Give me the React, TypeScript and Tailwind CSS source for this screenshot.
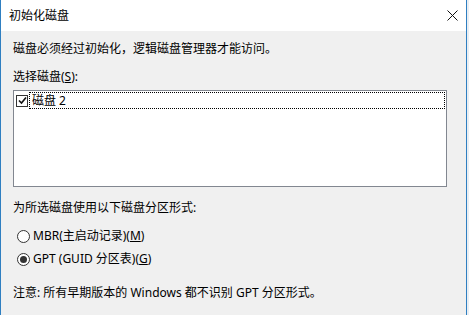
import React from "react";

const font = "font-['Segoe_UI','Noto_Sans','Noto_Sans_CJK_SC',sans-serif]";

const Radio = ({ checked }: { checked?: boolean }) => (
  <span className="w-[13px] h-[13px] rounded-full border border-[#333] bg-white flex items-center justify-center shrink-0">
    {checked && <span className="w-[7px] h-[7px] rounded-full bg-[#333]" />}
  </span>
);

const App = () => {
  return (
    <div className={`w-[469px] h-[315px] bg-[#e9eef3] flex ${font} text-[12px] text-black leading-[16px]`}>
      <div className="w-[467px] h-full flex flex-col border-x border-[#2f7fc1] bg-[#f0f0f0]">
        <div className="h-[31px] bg-white flex items-center justify-between pl-[8px] pr-[8px] shrink-0">
          <span>初始化磁盘</span>
          <svg width="11" height="11" viewBox="0 0 11 11">
            <path d="M0.5 0.5 L10.5 10.5 M10.5 0.5 L0.5 10.5" stroke="#111" strokeWidth="1" />
          </svg>
        </div>
        <div className="flex flex-col pl-[12px] pr-[19px] pt-[10px]">
          <p>磁盘必须经过初始化，逻辑磁盘管理器才能访问。</p>
          <p className="mt-[12px]">
            选择磁盘(<span className="underline">S</span>):
          </p>
          <div className="mt-[5px] h-[97px] w-[434px] bg-white border border-[#828790] pt-[1px] pl-[2px] pr-[1px]">
            <div className="flex items-center h-[17px]">
              <span className="w-[12px] h-[12px] border border-[#333] bg-white flex items-center justify-center shrink-0">
                <svg width="9" height="9" viewBox="0 0 9 9">
                  <path d="M1 4.5 L3.5 7 L8 1.5" stroke="#111" strokeWidth="1.6" fill="none" />
                </svg>
              </span>
              <div className="ml-[1px] flex-1 h-full border border-dotted border-black flex items-center pl-[2px]">
                磁盘 2
              </div>
            </div>
          </div>
          <p className="mt-[13px]">为所选磁盘使用以下磁盘分区形式:</p>
          <label className="mt-[12px] flex items-center gap-[3px] pl-[4px]">
            <Radio />
            <span>
              MBR(主启动记录)(<span className="underline">M</span>)
            </span>
          </label>
          <label className="mt-[7px] flex items-center gap-[3px] pl-[4px]">
            <Radio checked />
            <span>
              GPT (GUID 分区表)(<span className="underline">G</span>)
            </span>
          </label>
          <p className="mt-[18px]">注意: 所有早期版本的 Windows 都不识别 GPT 分区形式。</p>
        </div>
      </div>
    </div>
  );
};

export default App;
